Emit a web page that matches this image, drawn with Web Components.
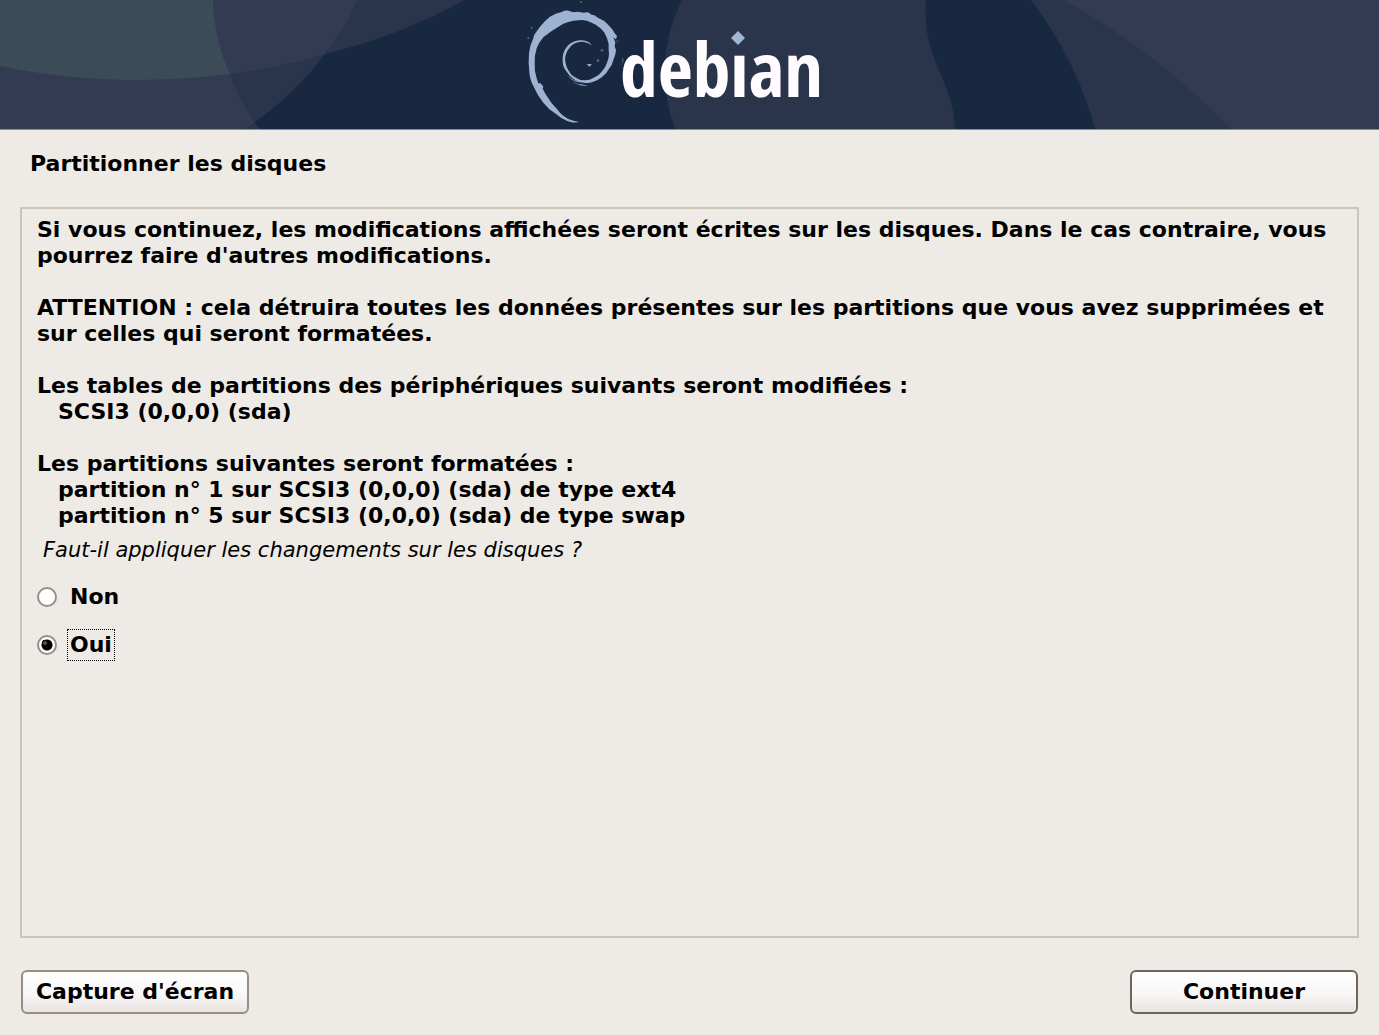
<!DOCTYPE html>
<html lang="fr">
<head>
<meta charset="utf-8">
<title>Partitionner les disques</title>
<style>
html, body { height: 100%; margin: 0; }
body { background: #eeebe6; color: #000; font: bold 22px/26px "DejaVu Sans", sans-serif; }
</style>
</head>
<body>
<installer-screen>
  <debian-banner slot="banner"></debian-banner>
  <span slot="title">Partitionner les disques</span>
  <disk-summary></disk-summary>
  <radio-question name="apply" value="oui">Faut-il appliquer les changements sur les disques ?</radio-question>
  <action-button slot="actions">Capture d'écran</action-button>
  <action-button slot="actions" primary>Continuer</action-button>
</installer-screen>
<script>
class ShadowElement extends HTMLElement {
  constructor() {
    super();
    this.attachShadow({ mode: "open" }).innerHTML = this.constructor.markup;
  }
}

customElements.define("installer-screen", class extends ShadowElement {
  static markup = `
    <style>
      :host { display: flex; flex-direction: column; min-height: 100vh; }
      h1 { margin: 0; padding: 21px 30px 30px; font-size: 22px; line-height: 26px; }
      main { flex: 1; margin: 0 20px; padding: 8px 15px; border: 2px solid #cdc4b9; }
      footer { display: flex; justify-content: space-between; padding: 32px 21px 21px; }
    </style>
    <slot name="banner"></slot>
    <h1><slot name="title"></slot></h1>
    <main><slot></slot></main>
    <footer><slot name="actions"></slot></footer>`;
});

customElements.define("debian-banner", class extends ShadowElement {
  static markup = `
    <style>
      :host { display: block; background: #192841; border-bottom: 1px solid #858c98; }
      svg { display: block; width: 100%; height: 129px; }
      text { font: bold 76px "Open Sans Condensed", "Roboto Condensed", "Noto Sans Condensed", Lato, sans-serif; fill: #fffbff; }
    </style>
    <svg viewBox="0 0 1379 129" preserveAspectRatio="xMidYMid slice" role="img" aria-label="debian">
      <path fill="#192841" d="M0 0H1379V129H0Z"/>
      <path fill="#2a344b" d="M0 0H464Q400 36 325 54Q292 98 245 129H0Z"/>
      <path fill="#2a344b" d="M245 129L255 123L260 129Z"/>
      <path fill="#323b52" d="M0 0H213Q214 39 230 74Q239 100 255 123L245 129H0Z"/>
      <path fill="#323b52" d="M213 0H357Q346 28 325 54Q279 68 230 74Q214 39 213 0Z"/>
      <path fill="#3b4b58" d="M0 0H213Q214 39 230 74Q109 89 0 66Z"/>
      <path fill="#2a344b" d="M682 0Q651 63 675 129H955C954 80 921 60 926 0Z"/>
      <path fill="#2a344b" d="M1031 0Q1077 61 1095 129H1379V0Z"/>
      <path fill="#323b52" d="M1063 0Q1155 50 1231 129H1379V0Z"/>
      <g transform="translate(520) scale(.33333)" fill="#9eb3d1">
        <path d="M178 366C166 368 153 368 140 362L124 354L105 340L88 328L70 308Q52 287 42 262Q29 238 28 215L26 190L27 160L31 138L38 120L43 104L60 80Q73 63 90 50Q107 40 125 36Q135 31 145 32L160 37L174 35L190 38L204 37L215 44L223 46L235 54Q251 60 262 72Q277 86 283 98L291 108L288 118L280 112L286 127L284 139L288 150L286 163L280 180Q277 195 268 205Q260 222 245 232Q233 242 220 245Q208 250 195 249Q178 248 165 240Q148 229 140 215Q128 200 128 185Q127 171 130 160Q136 144 145 135Q154 127 165 124Q175 120 185 121Q197 121 205 126Q212 130 215 137Q208 130 200 128Q192 125 185 125Q174 125 165 130Q155 135 150 142Q141 151 138 162Q134 173 136 185Q138 200 146 212Q153 226 165 232Q179 242 195 241Q209 241 220 234Q236 228 245 215Q257 203 262 185Q269 169 266 150Q268 131 261 115Q256 99 245 88Q232 74 215 68Q202 61 185 60L160 62L145 66L130 71L113 82L95 93L83 102L70 112Q57 127 50 145Q43 167 44 190Q43 215 50 235L55 250L62 250L70 260L68 266L77 283L95 310L109 325L120 338Q132 351 145 357L160 362Z"/>
        <path d="M139 223Q158 244 183 246Q164 252 139 223ZM150 240Q165 252 183 253L205 257Q175 260 150 240ZM200 193L216 192L208 200Z"/>
        <g opacity=".45"><circle cx="246" cy="151" r="4"/><circle cx="234" cy="182" r="4"/><circle cx="35" cy="83" r="3"/><circle cx="25" cy="114" r="3"/><circle cx="183" cy="6" r="3"/><path d="M291 118L295 130L290 125ZM307 170L311 179L307 195Z"/></g>
      </g>
      <text x="620" y="97">debian</text>
      <path fill="#2a344b" d="M729 31H748V52H729Z"/>
      <path fill="#9db8d2" d="M738 31L745 38L738 45L731 38Z"/>
    </svg>`;
});

customElements.define("disk-summary", class extends ShadowElement {
  static markup = `
    <style>
      :host { display: block; }
      p, ul { margin: 0; }
      p + p, ul + p { margin-top: 26px; }
      ul { padding-left: 21px; list-style: none; }
    </style>
    <p>Si vous continuez, les modifications affichées seront écrites sur les disques. Dans le cas contraire, vous pourrez faire d'autres modifications.</p>
    <p>ATTENTION : cela détruira toutes les données présentes sur les partitions que vous avez supprimées et sur celles qui seront formatées.</p>
    <p>Les tables de partitions des périphériques suivants seront modifiées :</p>
    <ul><li>SCSI3 (0,0,0) (sda)</li></ul>
    <p>Les partitions suivantes seront formatées :</p>
    <ul><li>partition n° 1 sur SCSI3 (0,0,0) (sda) de type ext4</li><li>partition n° 5 sur SCSI3 (0,0,0) (sda) de type swap</li></ul>`;
});

customElements.define("radio-question", class extends ShadowElement {
  static markup = `
    <style>
      :host { display: block; padding-top: 8px; }
      fieldset { display: flex; flex-direction: column; align-items: flex-start; gap: 16px; margin: 0; padding: 0; border: 0; }
      legend { margin-bottom: 18px; padding: 0 6px; font-size: 21px; font-weight: normal; font-style: italic; }
      label { display: flex; align-items: center; gap: 10px; height: 32px; }
      input { appearance: none; box-sizing: border-box; width: 20px; height: 20px; margin: 0; border: 2px solid #9a8e83; border-radius: 50%; background: #fff; outline: 0; }
      input:checked { background: radial-gradient(circle at 6px 6px, #777 0, #000 3px, transparent 3px), radial-gradient(circle, #000 5px, #fff 6px); }
      span { box-sizing: border-box; height: 32px; padding: 2px; border: 1px dotted transparent; }
      input:checked + span { border-color: #000; }
    </style>
    <fieldset>
      <legend><slot></slot></legend>
      <label><input type="radio" name="answer" value="non"><span>Non</span></label>
      <label><input type="radio" name="answer" value="oui" checked><span>Oui</span></label>
    </fieldset>`;
});

customElements.define("action-button", class extends ShadowElement {
  static markup = `
    <style>
      :host { display: block; --edge: #9b8d7f; }
      :host([primary]) { --edge: #6f655c; }
      button { box-sizing: border-box; min-width: 228px; height: 44px; padding: 0 12px; border: 2px solid var(--edge); border-radius: 6px; background: linear-gradient(#fff, #f8f6f7 55%, #e9e4df); color: inherit; font: inherit; }
    </style>
    <button type="button"><slot></slot></button>`;
});
</script>
</body>
</html>
